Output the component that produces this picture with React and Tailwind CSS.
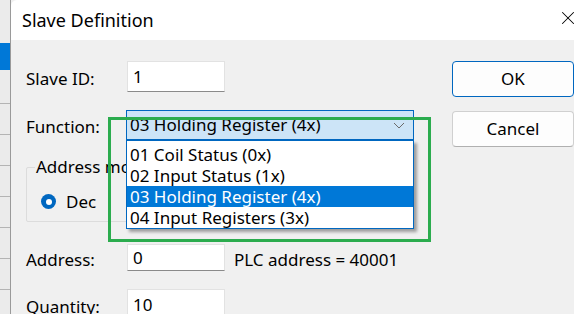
import { X } from "lucide-react";

const font = { fontFamily: '"Noto Sans", "Liberation Sans", sans-serif' };

function Field({ value, className = "" }) {
  return (
    <div
      className={`w-[98px] shrink-0 bg-white border border-[#e2e2e2] border-b-[#8a8a8a] flex items-center pl-[5px] text-[17px] text-black ${className}`}
    >
      {value}
    </div>
  );
}

function Label({ children, w = "w-[101px]" }) {
  return <div className={`${w} shrink-0 pt-[4px] text-[17px] text-black`}>{children}</div>;
}

const items = [
  "01 Coil Status (0x)",
  "02 Input Status (1x)",
  "03 Holding Register (4x)",
  "04 Input Registers (3x)",
];

export default function App() {
  return (
    <div className="w-[574px] h-[314px] flex overflow-hidden bg-[#f0f0f0]" style={font}>
      {/* background window strip */}
      <div className="w-[11px] shrink-0 flex flex-col bg-[#ebebeb] border-r border-[#9a9a9a]">
        <div className="h-[43px] shrink-0" />
        <div className="h-[27px] shrink-0 bg-[#0078d7]" />
        <div className="h-[33px] shrink-0" />
        {[0, 1, 2, 3, 4, 5, 6].map((i) => (
          <div key={i} className="h-[31px] shrink-0 border-t border-[#b4b4b4]" />
        ))}
      </div>

      {/* dialog */}
      <div className="flex-1 flex flex-col">
        <div className="h-[40px] shrink-0 bg-white flex items-center justify-between pl-[11px] rounded-tl-[6px]">
          <span className="text-[18px] text-black">Slave Definition</span>
          <X size={22} strokeWidth={1.1} className="text-black mr-[-5px] mt-[-4px]" />
        </div>

        <div className="flex-1 relative flex pl-[15px] pt-[21px]">
          <div className="w-[426px] shrink-0 flex flex-col">
            <div className="flex items-center h-[31px] shrink-0">
              <Label>Slave ID:</Label>
              <Field value="1" className="h-[31px]" />
            </div>

            <div className="flex items-center h-[30px] shrink-0 mt-[18px]">
              <Label w="w-[100px]">Function:</Label>
              <div className="w-[288px] h-[30px] bg-[#cce4f7] border border-[#0067c0] flex items-center justify-between pl-[3px] pr-[8px] text-[17px]">
                <span>03 Holding Register (4x)</span>
                <svg width="12" height="7" viewBox="0 0 12 7" fill="none">
                  <path d="M1 1l5 5 5-5" stroke="#6b6b6b" strokeWidth="1" />
                </svg>
              </div>
            </div>

            <div className="relative shrink-0 mt-[27px] w-[380px] h-[55px] border border-[#dcdcdc] rounded-[2px]">
              <div className="absolute left-[8px] top-[-14px] w-[91px] overflow-hidden whitespace-nowrap">
                <span className="bg-[#f0f0f0] px-[1px] text-[17px]">Address mode</span>
              </div>
              <div className="flex items-center gap-[10px] pl-[14px] pt-[26px]">
                <span className="w-[15px] h-[15px] rounded-full bg-[#0067c0] flex items-center justify-center">
                  <span className="w-[6px] h-[6px] rounded-full bg-white" />
                </span>
                <span className="text-[17px] leading-[15px]">Dec</span>
              </div>
            </div>

            <div className="flex items-center h-[27px] shrink-0 mt-[22px]">
              <Label>Address:</Label>
              <Field value="0" className="h-[27px] items-start" />
              <span className="ml-[9px] pt-[4px] text-[17px]">PLC address = 40001</span>
            </div>

            <div className="flex items-center h-[31px] shrink-0 mt-[18px]">
              <Label>Quantity:</Label>
              <Field value="10" className="h-[31px]" />
            </div>
          </div>

          <div className="flex flex-col">
            <button className="w-[122px] h-[36px] rounded-[4px] bg-[#fdfdfd] border border-[#0067c0] text-[17px]">
              OK
            </button>
            <button className="w-[122px] h-[36px] mt-[14px] rounded-[4px] bg-[#fdfdfd] border border-[#d0d0d0] border-b-[#b0b0b0] text-[17px]">
              Cancel
            </button>
          </div>

          {/* dropdown list */}
          <div className="absolute left-[115px] top-[100px] w-[288px] h-[89px] bg-white border border-[#0067c0] pt-[3px] shadow-[3px_3px_3px_rgba(0,0,0,0.35)]">
            {items.map((t, i) => (
              <div
                key={t}
                className={`h-[21px] flex items-center pl-[3px] text-[17px] ${
                  i === 2 ? "bg-[#0078d7] text-white" : "text-black"
                }`}
              >
                {t}
              </div>
            ))}
          </div>

          {/* highlight frame */}
          <div className="absolute left-[97px] top-[77px] w-[323px] h-[125px] border-[3px] border-[#2bac4e] pointer-events-none" />
        </div>
      </div>
    </div>
  );
}
